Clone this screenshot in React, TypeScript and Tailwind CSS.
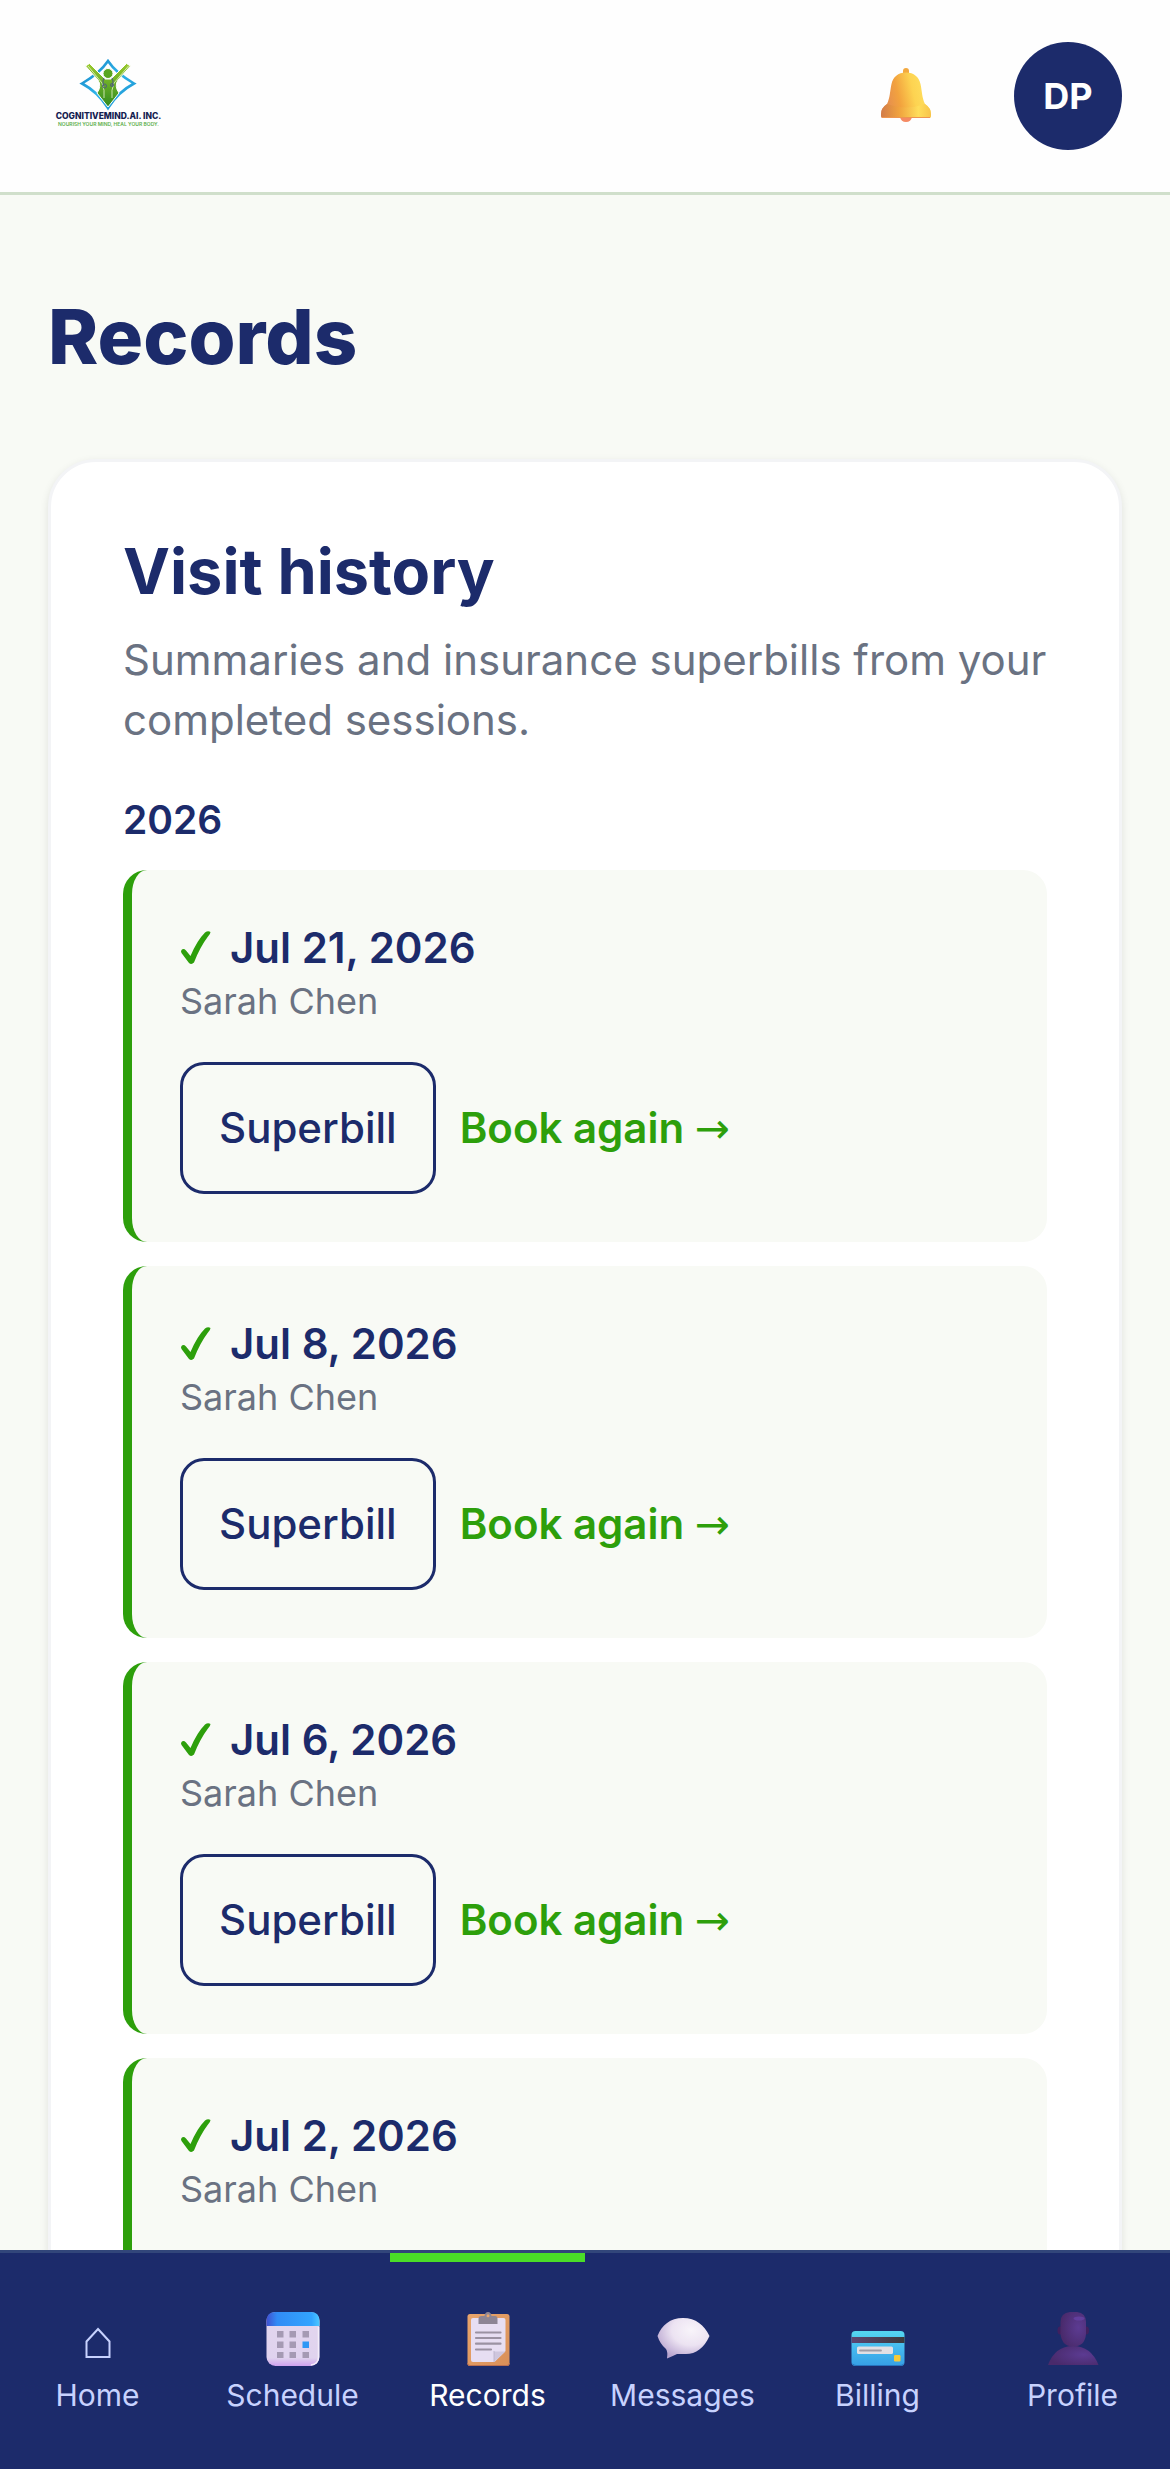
import React, { useState } from 'react';

interface Visit {
  id: string;
  date: string;
  provider: string;
}

const visits: Visit[] = [
  { id: 'v1', date: 'Jul 21, 2026', provider: 'Sarah Chen' },
  { id: 'v2', date: 'Jul 8, 2026', provider: 'Sarah Chen' },
  { id: 'v3', date: 'Jul 6, 2026', provider: 'Sarah Chen' },
  { id: 'v4', date: 'Jul 2, 2026', provider: 'Sarah Chen' },
];

const Logo = () => (
  <svg width="120" height="120" viewBox="0 0 120 120" role="img" aria-label="CognitiveMind.AI, Inc.">
    <defs>
      <linearGradient id="logoBlue" x1="0" y1="0" x2="1" y2="1">
        <stop offset="0" stopColor="#1583c4" />
        <stop offset="0.5" stopColor="#2fb4ea" />
        <stop offset="1" stopColor="#1b8fcd" />
      </linearGradient>
      <linearGradient id="logoGreen" x1="0" y1="0" x2="0" y2="1">
        <stop offset="0" stopColor="#9aca2c" />
        <stop offset="1" stopColor="#2f8a1f" />
      </linearGradient>
    </defs>
    <path d="M60 25 Q68 37 86 47.5 Q70 56 60 72 Q50 56 34 47.500 Q52 37 60 25Z" fill="none" stroke="url(#logoBlue)" strokeWidth="2.6" />
    <path d="M37.500 30 L41.500 27.500 L57 43 H63 L78.500 27.500 L82.500 30 L70 44 Q66 50 71 57 L60 71 L49 57 Q54 50 50 44Z" fill="url(#logoGreen)" stroke="#fff" strokeWidth="1" />
    <path d="M40 30 L54 47 Q57 54 56 62 M80.500 30 L66 47 Q63 54 64 62" fill="none" stroke="#e9f6cf" strokeWidth="0.8" />
    <circle cx="60" cy="37.500" r="5" fill="#58a51f" stroke="#fff" strokeWidth="1" />
    <path d="M56 42 Q54 46 56 50 M64 42 Q66 46 64 50" fill="none" stroke="#50607a" strokeWidth="1.1" />
    <circle cx="56.500" cy="50" r="2" fill="none" stroke="#50607a" strokeWidth="1" />
    <circle cx="64" cy="49" r="1.500" fill="none" stroke="#50607a" strokeWidth="1" />
    <text x="60.500" y="82.500" textAnchor="middle" fontSize="8.5" fontWeight="800" fill="#14204f" className="font-['Inter',sans-serif]">COGNITIVEMIND.AI. INC.</text>
    <text x="60.500" y="89.500" textAnchor="middle" fontSize="5" fontWeight="600" fill="#5cae4a" className="font-['Inter',sans-serif]">NOURISH YOUR MIND, HEAL YOUR BODY.</text>
  </svg>
);

const BellIcon = () => (
  <svg width="56" height="56" viewBox="0 0 56 56" aria-hidden="true">
    <defs>
      <linearGradient id="bellBody" x1="0" y1="0.600" x2="1" y2="0.400">
        <stop offset="0" stopColor="#e08656" />
        <stop offset="0.35" stopColor="#f2a23e" />
        <stop offset="0.65" stopColor="#fdd351" />
        <stop offset="1" stopColor="#ffe363" />
      </linearGradient>
      <linearGradient id="bellRim" x1="0" y1="0" x2="1" y2="0">
        <stop offset="0" stopColor="#cf7a45" />
        <stop offset="0.35" stopColor="#efa23d" />
        <stop offset="0.75" stopColor="#ffe05d" />
        <stop offset="1" stopColor="#f6bd45" />
      </linearGradient>
    </defs>
    <path d="M22 49 H34 Q33 54 28 54 Q23 54 22 49Z" fill="#f58a63" />
    <path d="M25 7 V3 Q25 0 28 0 Q31 0 31 3 V7Z" fill="#f3a93f" />
    <path d="M28 4.500 C36 4.500 41 9 42.500 16 C44 23 44 30 47 36 Q53 40 53 46 V48 Q53 50 51 50 H5 Q3 50 3 48 V46 Q3 40 9 36 C12 30 12 23 13.500 16 C15 9 20 4.500 28 4.500Z" fill="url(#bellBody)" />
    <path d="M9 36 Q28 43 47 36 Q53 40 53 46 V48 Q53 50 51 50 H5 Q3 50 3 48 V46 Q3 40 9 36Z" fill="url(#bellRim)" opacity="0.8" />
    <path d="M4 49.500 H52" stroke="#ee9550" strokeWidth="1" />
  </svg>
);

const CheckIcon = () => (
  <svg width="32" height="36" viewBox="0 0 32 36" aria-hidden="true">
    <path d="M1.500 20 Q3.500 18 6 20.500 L10.500 26 Q17 10.500 25 2.500 Q28 0.500 30.500 2 Q30.500 3.500 28 6.500 Q20 17 14 32.500 Q11.500 35 9 33 L1.500 23 Q0.500 21.500 1.500 20Z" fill="#2d9f0b" />
  </svg>
);

const HomeIcon = () => (
  <svg width="60" height="60" viewBox="0 0 60 60" fill="none" aria-hidden="true">
    <path d="M30 19 L41.500 31.500 V47 H18.500 V31.500Z" stroke="#c7d2fe" strokeWidth="2" />
  </svg>
);

const CalendarIcon = () => (
  <svg width="60" height="60" viewBox="0 0 60 60" aria-hidden="true">
    <defs>
      <linearGradient id="calTop" x1="0" y1="0" x2="1" y2="0">
        <stop offset="0" stopColor="#4150cf" />
        <stop offset="0.2" stopColor="#318bf5" />
        <stop offset="0.85" stopColor="#32a5ff" />
        <stop offset="1" stopColor="#4cc8ff" />
      </linearGradient>
      <linearGradient id="calBody" x1="0" y1="0" x2="0" y2="1">
        <stop offset="0" stopColor="#e2d6ee" />
        <stop offset="0.85" stopColor="#e0d3ee" />
        <stop offset="1" stopColor="#cfa2ee" />
      </linearGradient>
    </defs>
    <rect x="3.500" y="2" width="53" height="54" rx="9" fill="url(#calBody)" />
    <path d="M3.500 16 V11 Q3.500 2 12.500 2 H47.500 Q56.500 2 56.500 11 V16Z" fill="url(#calTop)" />
    <path d="M55.500 17 V47 Q55.500 54 48 55" fill="none" stroke="#f5effa" strokeWidth="1.500" />
    <g fill="#a59ab3">
      <rect x="14" y="21" width="6.500" height="6.500" />
      <rect x="26.500" y="21" width="6.500" height="6.500" />
      <rect x="39.500" y="21" width="6.500" height="6.500" />
      <rect x="14" y="31.500" width="6.500" height="6.500" />
      <rect x="26.500" y="31.500" width="6.500" height="6.500" />
      <rect x="14" y="42" width="6.500" height="6" />
      <rect x="26.500" y="42" width="6.500" height="6" />
      <rect x="39.500" y="42" width="6.500" height="6" />
    </g>
    <rect x="39.500" y="31.500" width="6.500" height="6.500" fill="#2e98f5" />
  </svg>
);

const ClipboardIcon = () => (
  <svg width="60" height="60" viewBox="0 0 60 60" aria-hidden="true">
    <defs>
      <linearGradient id="board" x1="0" y1="0" x2="1" y2="1">
        <stop offset="0" stopColor="#e9a56b" />
        <stop offset="1" stopColor="#d98f58" />
      </linearGradient>
    </defs>
    <rect x="9.500" y="4" width="42" height="52" rx="2.500" fill="url(#board)" />
    <path d="M9.500 53 Q9.500 55.500 12 55.500 H49 Q51.500 55.500 51.500 53" fill="none" stroke="#b96f52" strokeWidth="1" />
    <path d="M15 8 H45.500 Q47.500 8 47.500 10 V41 L36.500 52 H15 Q13 52 13 50 V10 Q13 8 15 8Z" fill="#e7def2" />
    <path d="M36 41.500 H47.500 L36 52Z" fill="#cfc6dd" />
    <path d="M36 41 V52" stroke="#b8aec8" strokeWidth="0.800" />
    <path d="M20.500 14 V9 Q20.500 6 23.500 6 H26.500 Q27 2 30 2 Q33 2 33.500 6 H37 Q39.500 6 39.500 9 V14Z" fill="#8d8594" />
    <circle cx="30" cy="5.800" r="1.500" fill="#e7a76f" />
    <path d="M18 22.500 H42.500 M18 28 H42.500 M18 33.700 H42.500 M18 39.500 H33" stroke="#9b92a2" strokeWidth="2.200" strokeLinecap="round" />
  </svg>
);

const MessageIcon = () => (
  <svg width="60" height="60" viewBox="0 0 60 60" aria-hidden="true">
    <defs>
      <radialGradient id="bubble" cx="0.65" cy="0.3" r="0.75">
        <stop offset="0" stopColor="#f8f4fa" />
        <stop offset="0.5" stopColor="#ece3f2" />
        <stop offset="1" stopColor="#b8a4cf" />
      </radialGradient>
    </defs>
    <path d="M30 8 C43 8 51 15 56.500 26 C51 38 43 44 33 44 L24 44 Q19 46.500 14 48.500 Q15 42 13 39 Q7 34 4.500 26 C9 15 17 8 30 8Z" fill="url(#bubble)" />
  </svg>
);

const CardIcon = () => (
  <svg width="60" height="60" viewBox="0 0 60 60" aria-hidden="true">
    <defs>
      <linearGradient id="cardBlue" x1="0" y1="0" x2="0" y2="1">
        <stop offset="0" stopColor="#55d6f0" />
        <stop offset="0.5" stopColor="#45b9ee" />
        <stop offset="1" stopColor="#369fe5" />
      </linearGradient>
      <linearGradient id="cardStripe" x1="0" y1="0" x2="1" y2="0">
        <stop offset="0" stopColor="#5d4674" />
        <stop offset="1" stopColor="#3b3b3d" />
      </linearGradient>
    </defs>
    <rect x="3.500" y="21" width="53" height="35" rx="4" fill="url(#cardBlue)" />
    <path d="M4.500 54 Q6 55.500 8 55.500 H52 Q54.500 55.500 55.500 54" fill="none" stroke="#2673bd" strokeWidth="1" />
    <rect x="3.500" y="27" width="53" height="6" fill="url(#cardStripe)" />
    <rect x="9" y="36.500" width="36" height="7.500" rx="1.500" fill="#e2e0e4" />
    <path d="M12 40.500 H33" stroke="#a09da6" strokeWidth="1.800" strokeLinecap="round" />
    <rect x="46" y="45" width="6.500" height="6.500" rx="1.200" fill="#f5ca3a" />
  </svg>
);

const ProfileIcon = () => (
  <svg width="60" height="60" viewBox="0 0 60 60" aria-hidden="true">
    <defs>
      <radialGradient id="person" cx="0.7" cy="0.45" r="0.7">
        <stop offset="0" stopColor="#5c3b92" />
        <stop offset="1" stopColor="#492a6b" />
      </radialGradient>
    </defs>
    <ellipse cx="17" cy="20.500" rx="2.500" ry="4" fill="#40205f" />
    <ellipse cx="43.500" cy="20.500" rx="2.500" ry="4" fill="#40205f" />
    <path d="M5 55 Q12 36 30 36 Q48 36 55.500 55Z" fill="url(#person)" />
    <path d="M27 2 H34 Q43 3 43 12 V24 Q42 36.500 30 36.500 Q19 36.500 17.500 24 V12 Q17.500 3 27 2Z" fill="url(#person)" />
    <ellipse cx="36" cy="8.500" rx="5.500" ry="2" fill="#6a45a8" opacity="0.7" />
  </svg>
);

const tabs = [
  { label: 'Home', icon: HomeIcon },
  { label: 'Schedule', icon: CalendarIcon },
  { label: 'Records', icon: ClipboardIcon },
  { label: 'Messages', icon: MessageIcon },
  { label: 'Billing', icon: CardIcon },
  { label: 'Profile', icon: ProfileIcon },
];

const VisitCard: React.FC<{ visit: Visit }> = ({ visit }) => (
  <li className="rounded-3xl border-l-[9px] border-[#2d9f0b] bg-[#f8faf5] p-12">
    <div className="flex items-center gap-[18px] text-[42px] leading-[60px] font-semibold text-[#1c2b6b]">
      <CheckIcon />
      <span>{visit.date}</span>
    </div>
    <p className="text-[36px] leading-[46px] text-gray-500">{visit.provider}</p>
    <div className="mt-[38px] flex items-center gap-6">
      <button className="h-[132px] rounded-3xl border-[3px] border-[#1c2b6b] px-9 text-[42px] leading-[60px] font-medium text-[#1c2b6b]">
        Superbill
      </button>
      <a href="#book" className="text-[42px] leading-[60px] font-semibold text-[#2d9f0b]">
        Book again <span className="font-['DejaVu_Sans',sans-serif] font-normal">→</span>
      </a>
    </div>
  </li>
);

const App: React.FC = () => {
  const [active, setActive] = useState('Records');

  return (
    <div className="flex h-screen flex-col bg-[#f8faf5] font-['Inter',sans-serif]">
      <header className="flex shrink-0 items-center justify-between border-b-[3px] border-[#d0dfcb] bg-[#fefefe] px-12 py-6">
        <a href="#home">
          <Logo />
        </a>
        <div className="flex items-center gap-9">
          <button aria-label="Notifications" className="flex size-36 items-center justify-center">
            <BellIcon />
          </button>
          <button className="flex size-[108px] items-center justify-center rounded-full bg-[#1c2b6b] text-[36px] font-bold text-white">
            DP
          </button>
        </div>
      </header>

      <main className="min-h-0 flex-1 overflow-y-auto px-12 pt-24 [scrollbar-width:none]">
        <h1 className="mb-[78px] text-[76px] leading-[90px] font-extrabold text-[#1c2b6b]">Records</h1>

        <section className="rounded-[48px] border-[3px] border-gray-100 bg-white p-[72px] shadow-[0_3px_9px_rgba(0,0,0,0.1)]">
          <h2 className="mb-[22px] text-[63px] leading-[74px] font-bold text-[#1c2b6b]">Visit history</h2>
          <p className="mb-12 text-[42px] leading-[60px] text-gray-500">
            Summaries and insurance superbills from your completed sessions.
          </p>
          <h3 className="mb-7 text-[39px] leading-[44px] font-semibold text-[#1c2b6b]">2026</h3>
          <ul className="flex flex-col gap-6">
            {visits.map((visit) => (
              <VisitCard key={visit.id} visit={visit} />
            ))}
          </ul>
        </section>
      </main>

      <nav className="grid shrink-0 grid-cols-6 border-t-[3px] border-[#32467a] bg-[#1c2b6b]">
        {tabs.map((tab) => (
          <button
            key={tab.label}
            onClick={() => setActive(tab.label)}
            className={`relative flex flex-col items-center pt-[57px] pb-[49px] text-[30px] leading-[50px] ${
              active === tab.label ? 'text-white' : 'text-[#c7d2fe]'
            }`}
          >
            {active === tab.label && <span className="absolute inset-x-0 top-0 h-[9px] bg-[#4ade28]" />}
            <tab.icon />
            <span>{tab.label}</span>
          </button>
        ))}
      </nav>
    </div>
  );
};

export default App;
